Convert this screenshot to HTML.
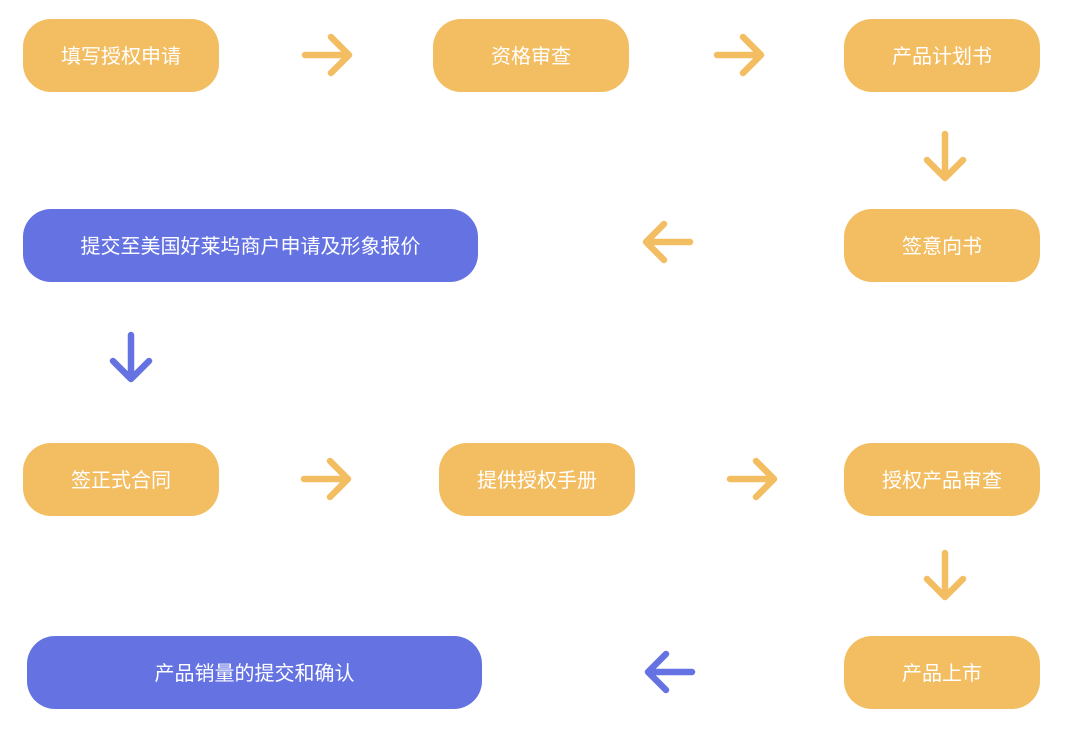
<!DOCTYPE html>
<html><head><meta charset="utf-8"><style>
body{margin:0;width:1068px;height:731px;background:#fff;position:relative;overflow:hidden;font-family:"Liberation Sans","Noto Sans CJK SC",sans-serif}
.b{position:absolute;height:73px;border-radius:28px;color:#fff;font-size:20px;display:flex;align-items:center;justify-content:center;padding-bottom:2px;box-sizing:border-box}
.o{background:#F3BD62}.u{background:#6573E2}
svg{position:absolute;width:50px;height:44px;overflow:visible}
</style></head><body>
<div class="b o" style="left:23px;top:19px;width:196px">填写授权申请</div>
<div class="b o" style="left:433px;top:19px;width:196px">资格审查</div>
<div class="b o" style="left:844px;top:19px;width:196px">产品计划书</div>
<div class="b u" style="left:23px;top:209px;width:455px">提交至美国好莱坞商户申请及形象报价</div>
<div class="b o" style="left:844px;top:209px;width:196px">签意向书</div>
<div class="b o" style="left:23px;top:443px;width:196px">签正式合同</div>
<div class="b o" style="left:439px;top:443px;width:196px">提供授权手册</div>
<div class="b o" style="left:844px;top:443px;width:196px">授权产品审查</div>
<div class="b u" style="left:27px;top:636px;width:455px">产品销量的提交和确认</div>
<div class="b o" style="left:844px;top:636px;width:196px">产品上市</div>

<svg style="left:302px;top:33px"><g fill="none" stroke="#F3BD62" stroke-width="6.5" stroke-linecap="round" stroke-linejoin="round"><path d="M3 22H47M29 4L47 22L29 40"/></g></svg>
<svg style="left:714px;top:33px"><g fill="none" stroke="#F3BD62" stroke-width="6.5" stroke-linecap="round" stroke-linejoin="round"><path d="M3 22H47M29 4L47 22L29 40"/></g></svg>
<svg style="left:920px;top:134px;transform:rotate(90deg)"><g fill="none" stroke="#F3BD62" stroke-width="6.5" stroke-linecap="round" stroke-linejoin="round"><path d="M3 22H47M29 4L47 22L29 40"/></g></svg>
<svg style="left:643px;top:220px;transform:rotate(180deg)"><g fill="none" stroke="#F3BD62" stroke-width="6.5" stroke-linecap="round" stroke-linejoin="round"><path d="M3 22H47M29 4L47 22L29 40"/></g></svg>
<svg style="left:106px;top:335px;transform:rotate(90deg)"><g fill="none" stroke="#6573E2" stroke-width="6.5" stroke-linecap="round" stroke-linejoin="round"><path d="M3 22H47M29 4L47 22L29 40"/></g></svg>
<svg style="left:301px;top:457px"><g fill="none" stroke="#F3BD62" stroke-width="6.5" stroke-linecap="round" stroke-linejoin="round"><path d="M3 22H47M29 4L47 22L29 40"/></g></svg>
<svg style="left:727px;top:457px"><g fill="none" stroke="#F3BD62" stroke-width="6.5" stroke-linecap="round" stroke-linejoin="round"><path d="M3 22H47M29 4L47 22L29 40"/></g></svg>
<svg style="left:920px;top:553px;transform:rotate(90deg)"><g fill="none" stroke="#F3BD62" stroke-width="6.5" stroke-linecap="round" stroke-linejoin="round"><path d="M3 22H47M29 4L47 22L29 40"/></g></svg>
<svg style="left:645px;top:650px;transform:rotate(180deg)"><g fill="none" stroke="#6573E2" stroke-width="6.5" stroke-linecap="round" stroke-linejoin="round"><path d="M3 22H47M29 4L47 22L29 40"/></g></svg>
</body></html>
